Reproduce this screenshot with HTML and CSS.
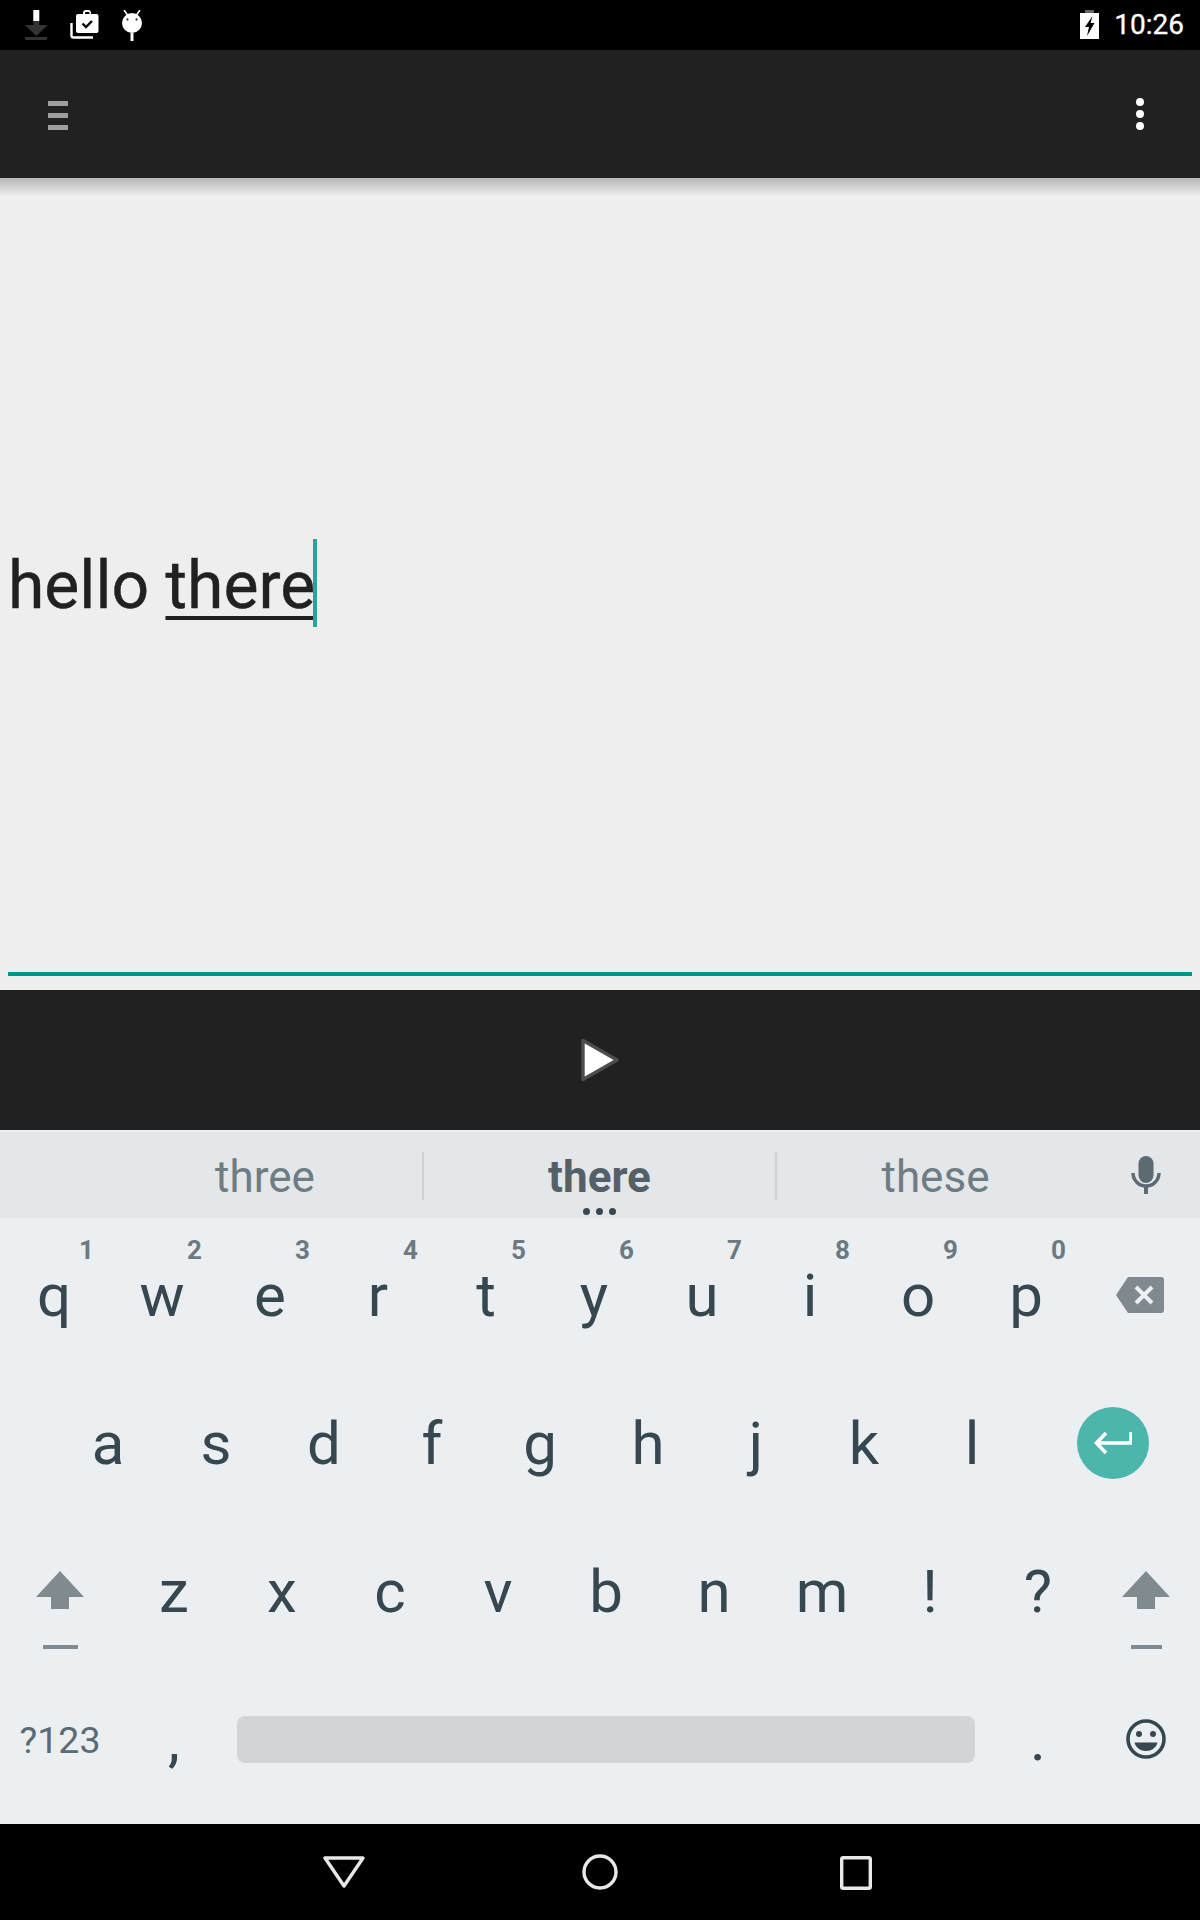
FILE: index.html
```html
<!DOCTYPE html>
<html lang="en">
<head>
<meta charset="utf-8">
<title>Text to speech</title>
<link rel="stylesheet" href="styles.css">
</head>
<body>
<div class="screen">
  <header class="status">
    <div class="status-left">
      <svg class="ic-dl" width="26" height="34" viewBox="0 0 26 34"><rect x="9.3" y="0" width="6" height="11" fill="#fff"/><path d="M9.300 12h6v4h8.500l-11.500 11-11.500-11h8.500z" fill="#333" transform="translate(0 -1)"/><rect x="1" y="27" width="22" height="3" fill="#333"/></svg>
      <svg class="ic-bag" width="30" height="30" viewBox="0 0 30 30"><path d="M1.500 13v12.500a2 2 0 0 0 2 2H23" fill="none" stroke="#fff" stroke-width="2.400"/><path d="M8 4h5V3a3 3 0 0 1 3-3h2a3 3 0 0 1 3 3v1h5.500a2 2 0 0 1 2 2v15a2 2 0 0 1-2 2H8a2 2 0 0 1-2-2V6a2 2 0 0 1 2-2zM15 4h4.500V3a1 1 0 0 0-1-1h-2.500a1 1 0 0 0-1 1z" fill="#fff" fill-rule="evenodd"/><path d="M12.500 13.500l3.500 3.500 6-6" fill="none" stroke="#000" stroke-width="2.400"/></svg>
      <svg class="ic-droid" width="24" height="32" viewBox="0 0 24 32"><path d="M4 0l3.500 5M20 0l-3.500 5" stroke="#fff" stroke-width="1.600"/><circle cx="12" cy="13" r="10" fill="#fff"/><circle cx="7.500" cy="9.500" r="1" fill="#000"/><circle cx="16.500" cy="9.500" r="1" fill="#000"/><rect x="10.500" y="23" width="3" height="8" fill="#fff"/></svg>
    </div>
    <div class="status-right">
      <svg class="ic-batt" width="19" height="29" viewBox="0 0 19 29"><rect x="5" width="9" height="3" fill="#666"/><rect y="3" width="19" height="26" fill="#fff"/><path d="M12.500 6L5 17h4l-2 9 7.500-13H10.500z" fill="#000"/></svg>
      <span class="clock">10:26</span>
    </div>
  </header>

  <nav class="toolbar">
    <div class="hamburger"><i></i><i></i><i></i></div>
    <div class="overflow"><i></i><i></i><i></i></div>
  </nav>

  <main class="editor">
    <div class="text-line">hello <span class="composing">there</span><span class="caret"></span></div>
    <div class="field-line"></div>
  </main>

  <section class="player">
    <svg width="42" height="48" viewBox="0 0 42 48"><path d="M4 4.500L38 24 4 43.500z" fill="#fff" stroke="#4d4d4d" stroke-width="3.400" stroke-linejoin="round"/></svg>
  </section>

  <section class="ime">
    <div class="suggestions">
      <span class="sug">three</span>
      <span class="sug sug-main">there<span class="more"><i></i><i></i><i></i></span></span>
      <span class="sug">these</span>
      <span class="mic">
        <svg width="30" height="40" viewBox="0 0 30 40"><rect x="7.500" y="1" width="15" height="27" rx="7.500" fill="#5c6a72"/><path d="M2 18a13 13 0 0 0 26 0" fill="none" stroke="#5c6a72" stroke-width="3.400"/><rect x="13" y="31" width="4" height="8" fill="#5c6a72"/></svg>
      </span>
    </div>

    <div class="keys">
      <div class="row row-top">
        <span class="key">q<b class="hint">1</b></span>
        <span class="key">w<b class="hint">2</b></span>
        <span class="key">e<b class="hint">3</b></span>
        <span class="key">r<b class="hint">4</b></span>
        <span class="key">t<b class="hint">5</b></span>
        <span class="key">y<b class="hint">6</b></span>
        <span class="key">u<b class="hint">7</b></span>
        <span class="key">i<b class="hint">8</b></span>
        <span class="key">o<b class="hint">9</b></span>
        <span class="key">p<b class="hint">0</b></span>
        <span class="key key-del">
          <svg width="48" height="36" viewBox="0 0 48 36"><path d="M12 0h33a3 3 0 0 1 3 3v30a3 3 0 0 1-3 3H12L0 18z" fill="#80898e"/><path d="M20 10l16 16M36 10L20 26" stroke="#ebeff2" stroke-width="4"/></svg>
        </span>
      </div>
      <div class="row row-mid">
        <span class="key">a</span>
        <span class="key">s</span>
        <span class="key">d</span>
        <span class="key">f</span>
        <span class="key">g</span>
        <span class="key">h</span>
        <span class="key">j</span>
        <span class="key">k</span>
        <span class="key">l</span>
        <span class="key key-enter">
          <span class="enter-disc">
            <svg width="38" height="24" viewBox="0 0 38 24"><path d="M37 1v11H3M12 2L2.500 12 12 22" fill="none" stroke="#fff" stroke-width="3.600"/></svg>
          </span>
        </span>
      </div>
      <div class="row row-low">
        <span class="key key-shift">
          <svg class="shift" width="48" height="78" viewBox="0 0 48 78"><path d="M24 0l24 26H33v12H15V26H0z" fill="#808b90"/><rect x="7" y="74" width="35" height="4" fill="#808b90"/></svg>
        </span>
        <span class="key">z</span>
        <span class="key">x</span>
        <span class="key">c</span>
        <span class="key">v</span>
        <span class="key">b</span>
        <span class="key">n</span>
        <span class="key">m</span>
        <span class="key">!</span>
        <span class="key">?</span>
        <span class="key key-shift">
          <svg class="shift" width="48" height="78" viewBox="0 0 48 78"><path d="M24 0l24 26H33v12H15V26H0z" fill="#808b90"/><rect x="9" y="74" width="31" height="4" fill="#808b90"/></svg>
        </span>
      </div>
      <div class="row row-bottom">
        <span class="key key-sym">?123</span>
        <span class="key">,</span>
        <span class="key key-space"><span class="spacebar"></span></span>
        <span class="key">.</span>
        <span class="key key-emoji">
          <svg width="40" height="40" viewBox="0 0 40 40"><circle cx="20" cy="20" r="18" fill="none" stroke="#37474f" stroke-width="3.600"/><circle cx="13" cy="15" r="3" fill="#37474f"/><circle cx="27" cy="15" r="3" fill="#37474f"/><path d="M8.500 23.500h23C30 29 25.500 32 20 32s-10-3-11.500-8.500z" fill="#37474f"/></svg>
        </span>
      </div>
    </div>
  </section>

  <footer class="navbar">
    <svg class="nav-back" width="42" height="32" viewBox="0 0 42 32"><path d="M2 2h38L21 30z" fill="none" stroke="#e8e8e8" stroke-width="3.400" stroke-linejoin="round"/></svg>
    <svg class="nav-home" width="36" height="36" viewBox="0 0 36 36"><circle cx="18" cy="18" r="16" fill="none" stroke="#e8e8e8" stroke-width="3.400"/></svg>
    <svg class="nav-recent" width="32" height="34" viewBox="0 0 32 34"><rect x="1.700" y="1.700" width="28.600" height="30.600" rx="1.500" fill="none" stroke="#e8e8e8" stroke-width="3.400"/></svg>
  </footer>
</div>
</body>
</html>
```
FILE: styles.css
```css
* { box-sizing: border-box; }
html, body { margin: 0; padding: 0; background: #000; }
.screen {
  width: 1200px;
  height: 1920px;
  display: flex;
  flex-direction: column;
  overflow: hidden;
  font-family: Roboto, "Liberation Sans", sans-serif;
}

/* status bar */
.status {
  height: 50px;
  flex: none;
  background: #000;
  display: flex;
  justify-content: space-between;
  align-items: flex-start;
  padding: 10px 16px 0 24px;
}
.status-left { display: flex; align-items: flex-start; }
.status-right { display: flex; align-items: flex-start; }
.ic-dl { display: block; }
.ic-bag { display: block; margin-left: 20px; }
.ic-droid { display: block; margin-left: 20px; }
.ic-batt { display: block; }
.clock { color: #fff; font-size: 28px; line-height: 29px; margin-left: 15px; -webkit-text-stroke: .3px #fff; }

/* action bar */
.toolbar {
  height: 128px;
  flex: none;
  background: #212121;
  display: flex;
  justify-content: space-between;
  align-items: center;
  padding: 0 56px 0 48px;
  position: relative;
  z-index: 2;
}
.toolbar::after {
  content: "";
  position: absolute;
  left: 0;
  right: 0;
  top: 100%;
  height: 18px;
  background: linear-gradient(rgba(0, 0, 0, .24), rgba(0, 0, 0, 0));
}
.hamburger { display: flex; flex-direction: column; gap: 7px; margin-top: 3px; }
.hamburger i { display: block; width: 20px; height: 5px; background: #9e9e9e; }
.overflow { display: flex; flex-direction: column; gap: 4px; }
.overflow i { display: block; width: 8px; height: 8px; border-radius: 50%; background: #fff; }

/* editor */
.editor {
  flex: 1;
  background: #eee;
  display: flex;
  flex-direction: column;
  padding: 0 8px 14px;
}
.text-line {
  flex: 1;
  display: flex;
  align-items: center;
  white-space: pre;
  padding-top: 22px;
  font-size: 66px;
  line-height: 88px;
  color: #212121;
  -webkit-text-stroke: .4px #212121;
}
.composing {
  text-decoration: underline;
  text-decoration-thickness: 4px;
  text-underline-offset: 8px;
}
.caret {
  display: block;
  width: 4px;
  height: 88px;
  margin: -7px 0 0 -2px;
  background: #26a69a;
}
.field-line { height: 4px; background: #009688; flex: none; }

/* player */
.player {
  height: 140px;
  flex: none;
  background: #212121;
  display: flex;
  align-items: center;
  justify-content: center;
}

/* keyboard */
.ime { flex: none; background: #ebeff2; padding-top: 2px; }
.suggestions {
  height: 86px;
  background: #e3e7ea;
  display: grid;
  grid-template-columns: 314px 355px 315px 1fr;
  padding: 2px 0 0 108px;
  align-items: center;
  margin-bottom: 2px;
}
.sug {
  position: relative;
  text-align: center;
  padding-top: 3px;
  font-size: 44px;
  line-height: 45px;
  color: #6e7c83;
}
.sug + .sug + .sug { padding-left: 2px; }
.sug-main {
  font-weight: 700;
  color: #546068;
  border-left: 2px solid #ccd0d3;
  border-right: 2px solid #ccd0d3;
}
.more {
  position: absolute;
  left: 0;
  right: 0;
  top: 56px;
  display: flex;
  justify-content: center;
  gap: 6px;
}
.more i { display: block; width: 7px; height: 7px; border-radius: 50%; background: #37474f; }
.mic { display: flex; justify-content: center; margin-top: -2px; }

.keys { padding: 1px 0 11px; }
.row { display: flex; height: 148px; }
.row-mid { padding-left: 54px; }
.key {
  position: relative;
  width: 108px;
  flex: none;
  display: flex;
  align-items: center;
  justify-content: center;
  padding-top: 2px;
  font-size: 60px;
  line-height: 60px;
  color: #37474f;
}
.hint {
  position: absolute;
  left: 79px;
  top: 14px;
  font-size: 26px;
  line-height: 30px;
  font-weight: 700;
  color: #6b7a80;
}
.key-del { width: 120px; padding-top: 0; }
.key-enter { width: 174px; padding-top: 0; }
.enter-disc {
  width: 72px;
  height: 72px;
  border-radius: 50%;
  background: #4db6ac;
  display: flex;
  align-items: center;
  justify-content: center;
}
.key-shift { align-items: flex-start; padding-top: 54px; }
.row-low .key:first-child { width: 120px; }
.key-sym { width: 120px; font-size: 37.500px; color: #5b6b73; }
.key-space { width: 756px; padding-top: 0; }
.key-emoji { padding-top: 0; }
.spacebar { display: block; width: 738px; height: 47px; border-radius: 8px; background: #d1d5d8; }

/* nav bar */
.navbar {
  height: 96px;
  flex: none;
  background: #000;
  display: flex;
  align-items: flex-start;
  padding-top: 32px;
}
.nav-back { margin-left: 323px; }
.nav-home { margin-left: 217px; margin-top: -2px; }
.nav-recent { margin-left: 222px; }
```
